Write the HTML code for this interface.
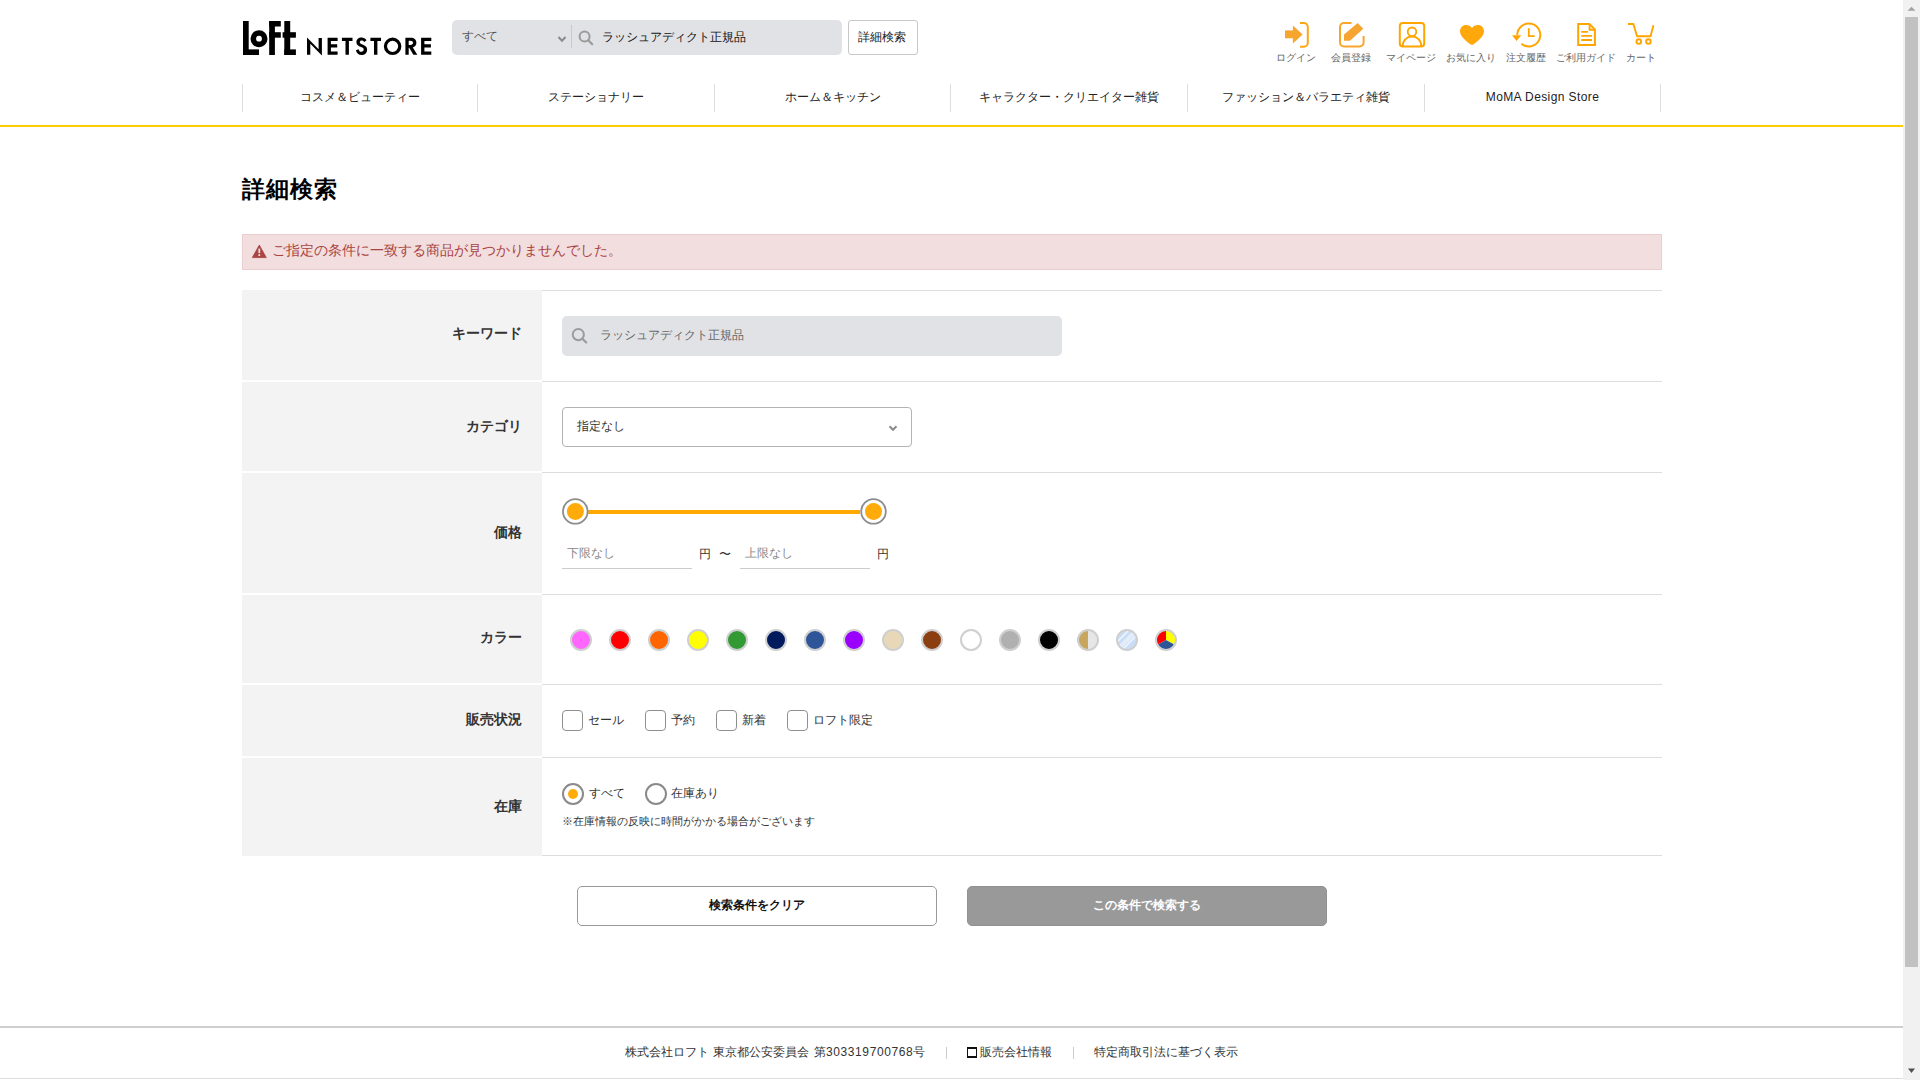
<!DOCTYPE html>
<html lang="ja">
<head>
<meta charset="utf-8">
<title>詳細検索 | ロフト公式通販サイト</title>
<style>
html,body{margin:0;padding:0;}
body{width:1920px;height:1080px;overflow:hidden;position:relative;background:#fff;font-family:"Liberation Sans",sans-serif;color:#333;}
.a{position:absolute;}
.t{position:absolute;white-space:nowrap;line-height:1;}
</style>
</head>
<body>

<!-- ============ HEADER ============ -->
<!-- logo -->
<svg class="a" style="left:0;top:0" width="460" height="70" viewBox="0 0 460 70">
  <g fill="#000">
    <!-- L -->
    <rect x="243" y="21" width="5.7" height="34"/>
    <rect x="243" y="49.4" width="16" height="5.6"/>
    <!-- o -->
    <circle cx="259" cy="38.7" r="5.7" fill="none" stroke="#000" stroke-width="5.6"/>
    <!-- F -->
    <rect x="269.2" y="21" width="5.7" height="34"/>
    <rect x="269.2" y="21" width="11.6" height="5.5"/>
    <rect x="269.2" y="32.2" width="11.6" height="5.5"/>
    <!-- t -->
    <rect x="284.3" y="21" width="5.9" height="34"/>
    <rect x="282.6" y="32.2" width="13.3" height="5.5"/>
    <rect x="284.3" y="49.4" width="11.6" height="5.6"/>
    <!-- NETSTORE -->
    <path d="M307,37.5 L318.6,49.3 V38 H321.9 V55.6 L310.3,43.8 V54.8 H307 Z"/>
    <path d="M327.6,37.7 H337.6 V40.9 H330.9 V44.2 H337.2 V47.5 H330.9 V51.5 H337.6 V54.8 H327.6 Z"/>
    <path d="M341.9,37.7 H352.5 V40.9 H348.9 V54.8 H345.5 V40.9 H341.9 Z"/>
    <path d="M366.6,40.2 C365.2,38.5 363.6,37.6 361.6,37.6 C358.4,37.6 356.4,39.6 356.4,42.2 C356.4,44.9 358.4,45.9 361,46.9 C362.9,47.6 363.7,48.3 363.7,49.6 C363.7,50.9 362.7,51.8 361.4,51.8 C359.9,51.8 358.9,50.8 358.6,49.2 L355.9,50.3 C356.6,53.3 358.7,55.1 361.5,55.1 C364.8,55.1 367.1,52.9 367.1,49.7 C367.1,46.9 365.5,45.6 362.5,44.5 C360.6,43.8 359.8,43.3 359.8,42.1 C359.8,41.2 360.6,40.6 361.6,40.6 C362.6,40.6 363.4,41 364.2,42 Z"/>
    <path d="M370.4,37.7 H381 V40.9 H377.4 V54.8 H374 V40.9 H370.4 Z"/>
    <path fill-rule="evenodd" d="M392.6,37.6 A8.75,8.75 0 1 1 392.6,55.1 A8.75,8.75 0 1 1 392.6,37.6 Z M392.6,40.8 A5.5,5.5 0 1 0 392.6,51.9 A5.5,5.5 0 1 0 392.6,40.8 Z"/>
    <path fill-rule="evenodd" d="M405.4,37.7 H410.8 C414.3,37.7 416.4,39.7 416.4,42.8 C416.4,45.2 415,46.9 412.8,47.5 L417.3,54.8 H413.4 L409.2,47.7 H408.7 V54.8 H405.4 Z M408.7,40.7 V44.9 H410.3 C412,44.9 413,44.2 413,42.8 C413,41.4 412,40.7 410.3,40.7 Z"/>
    <path d="M421.1,37.7 H431.3 V40.9 H424.4 V44.2 H430.9 V47.5 H424.4 V51.5 H431.3 V54.8 H421.1 Z"/>
  </g>
</svg>

<!-- search box -->
<div class="a" style="left:452px;top:20px;width:390px;height:35px;background:#e1e2e6;border-radius:5px;"></div>
<div class="t" style="left:462px;top:30px;font-size:12px;color:#555;">すべて</div>
<svg class="a" style="left:555px;top:33px" width="14" height="12" viewBox="0 0 14 12"><polyline points="3.5,4 7,7.8 10.5,4" fill="none" stroke="#8a8a8a" stroke-width="2"/></svg>
<div class="a" style="left:571px;top:25px;width:1px;height:23px;background:#c9c9cc;"></div>
<svg class="a" style="left:576px;top:28px" width="20" height="20" viewBox="0 0 20 20"><circle cx="8.6" cy="8.6" r="5" fill="none" stroke="#9b9b9b" stroke-width="2"/><line x1="12.3" y1="12.3" x2="16.2" y2="16.2" stroke="#9b9b9b" stroke-width="2.2" stroke-linecap="round"/></svg>
<div class="t" style="left:602px;top:31px;font-size:12px;color:#111;">ラッシュアディクト正規品</div>

<!-- detail button -->
<div class="a" style="left:848px;top:20px;width:68px;height:33px;border:1px solid #c8c8c8;border-radius:3px;background:#fff;"></div>
<div class="t" style="left:858px;top:31px;font-size:12px;color:#222;">詳細検索</div>

<!-- header icons -->
<svg class="a" style="left:1260px;top:10px" width="420" height="45" viewBox="1260 10 420 45">
  <!-- login -->
  <g fill="#f6a52e">
    <rect x="1285" y="30.4" width="9" height="7.9"/>
    <polygon points="1292.9,25.4 1302.6,34.4 1292.9,43.6"/>
  </g>
  <path d="M1300,23 H1303.8 A4,4 0 0 1 1307.8,27 V42.7 A4,4 0 0 1 1303.8,46.7 H1300" fill="none" stroke="#ffa514" stroke-width="2"/>
  <!-- register -->
  <path d="M1351.5,23 H1344 A4,4 0 0 0 1340,27 V42.5 A4,4 0 0 0 1344,46.5 H1359.6 A4,4 0 0 0 1363.6,42.5 V36" fill="none" stroke="#f9a52a" stroke-width="2"/>
  <polygon points="1344,34.5 1357.6,23 1363.3,28.8 1350,40.8 1344,40.8" fill="#f6a532"/>
  <!-- mypage -->
  <rect x="1399.8" y="23" width="24.4" height="23.6" rx="3" fill="none" stroke="#ffa500" stroke-width="2"/>
  <circle cx="1412" cy="31.8" r="4.3" fill="none" stroke="#ffa500" stroke-width="1.8"/>
  <path d="M1402.8,46.2 C1402.8,40.2 1406.8,36.6 1412,36.6 C1417.2,36.6 1421.2,40.2 1421.2,46.2" fill="none" stroke="#ffa500" stroke-width="2"/>
  <!-- heart -->
  <path d="M1472,28.1 C1470.8,26 1468.6,24.9 1466,24.9 C1462.6,24.9 1460,27.6 1460,31.2 C1460,35.8 1464.5,39.7 1470,44.1 C1470.6,44.6 1471.3,44.9 1472,44.9 C1472.7,44.9 1473.4,44.6 1474,44.1 C1479.5,39.7 1484,35.8 1484,31.2 C1484,27.6 1481.4,24.9 1478,24.9 C1475.4,24.9 1473.2,26 1472,28.1 Z" fill="#ffa80b"/>
  <!-- history -->
  <path d="M1517.3,35 A11.5,11.5 0 1 1 1521.4,43.8" fill="none" stroke="#ffa500" stroke-width="2"/>
  <polygon points="1512,35.2 1521.2,35.2 1516.6,40.9" fill="#ffa500"/>
  <path d="M1528.8,28.2 V36.1 H1534.7" fill="none" stroke="#ffa500" stroke-width="1.8"/>
  <!-- guide -->
  <path d="M1578.2,24.1 H1589.4 L1594.9,29.4 V44.9 H1578.2 Z" fill="none" stroke="#ffa500" stroke-width="2" stroke-miterlimit="2"/>
  <path d="M1589.6,24.8 V29.8 H1594.4" fill="none" stroke="#ffa500" stroke-width="1.9"/>
  <path d="M1581.2,31.9 H1588 M1581.2,35.9 H1592 M1581.2,40 H1592" stroke="#ffa500" stroke-width="1.9"/>
  <!-- cart -->
  <path d="M1628,24 H1633.4 L1637,36.2 H1650.6 L1653.4,25.3" fill="none" stroke="#ffa500" stroke-width="1.9" stroke-linejoin="round"/>
  <circle cx="1638.8" cy="41.6" r="2.3" fill="none" stroke="#ffa500" stroke-width="1.9"/>
  <circle cx="1648.4" cy="41.6" r="2.3" fill="none" stroke="#ffa500" stroke-width="1.9"/>
</svg>
<div class="t" style="left:1276px;top:53px;font-size:10px;color:#666;">ログイン</div>
<div class="t" style="left:1331px;top:53px;font-size:10px;color:#666;">会員登録</div>
<div class="t" style="left:1386px;top:53px;font-size:10px;color:#666;">マイページ</div>
<div class="t" style="left:1446px;top:53px;font-size:10px;color:#666;">お気に入り</div>
<div class="t" style="left:1506px;top:53px;font-size:10px;color:#666;">注文履歴</div>
<div class="t" style="left:1556px;top:53px;font-size:10px;color:#666;">ご利用ガイド</div>
<div class="t" style="left:1626px;top:53px;font-size:10px;color:#666;">カート</div>

<!-- nav -->
<div class="a" style="left:242px;top:84px;width:1px;height:28px;background:#ddd;"></div>
<div class="a" style="left:477px;top:84px;width:1px;height:28px;background:#ddd;"></div>
<div class="a" style="left:714px;top:84px;width:1px;height:28px;background:#ddd;"></div>
<div class="a" style="left:950px;top:84px;width:1px;height:28px;background:#ddd;"></div>
<div class="a" style="left:1187px;top:84px;width:1px;height:28px;background:#ddd;"></div>
<div class="a" style="left:1424px;top:84px;width:1px;height:28px;background:#ddd;"></div>
<div class="a" style="left:1660px;top:84px;width:1px;height:28px;background:#ddd;"></div>
<div class="t" style="left:243px;width:234px;text-align:center;top:91px;font-size:12px;color:#222;">コスメ＆ビューティー</div>
<div class="t" style="left:478px;width:236px;text-align:center;top:91px;font-size:12px;color:#222;">ステーショナリー</div>
<div class="t" style="left:715px;width:235px;text-align:center;top:91px;font-size:12px;color:#222;">ホーム＆キッチン</div>
<div class="t" style="left:951px;width:236px;text-align:center;top:91px;font-size:12px;color:#222;">キャラクター・クリエイター雑貨</div>
<div class="t" style="left:1188px;width:236px;text-align:center;top:91px;font-size:12px;color:#222;">ファッション＆バラエティ雑貨</div>
<div class="t" style="left:1425px;width:235px;text-align:center;top:91px;font-size:12px;letter-spacing:0.4px;color:#222;">MoMA Design Store</div>

<div class="a" style="left:0;top:125px;width:1903px;height:2px;background:#ffcc00;"></div>

<!-- ============ CONTENT ============ -->
<div class="t" style="left:242px;top:178px;font-size:23px;letter-spacing:1px;font-weight:bold;color:#000;">詳細検索</div>

<!-- alert -->
<div class="a" style="left:242px;top:234px;width:1418px;height:34px;background:#f2dede;border:1px solid #ebccd1;"></div>
<svg class="a" style="left:250px;top:242px" width="20" height="18" viewBox="0 0 20 18"><polygon points="9.3,3.1 16.3,15.6 2.3,15.6" fill="#a94442" stroke="#a94442" stroke-width="0.8" stroke-linejoin="round"/><rect x="8.4" y="6.6" width="1.8" height="4.5" fill="#f2dede"/><rect x="8.4" y="12.2" width="1.8" height="1.8" fill="#f2dede"/></svg>
<div class="t" style="left:272px;top:243px;font-size:14px;color:#a94442;">ご指定の条件に一致する商品が見つかりませんでした。</div>

<!-- table rows -->
<!-- label backgrounds -->
<div class="a" style="left:242px;top:290px;width:300px;height:90px;background:#f3f3f3;"></div>
<div class="a" style="left:242px;top:382px;width:300px;height:89px;background:#f3f3f3;"></div>
<div class="a" style="left:242px;top:473px;width:300px;height:120px;background:#f3f3f3;"></div>
<div class="a" style="left:242px;top:595px;width:300px;height:88px;background:#f3f3f3;"></div>
<div class="a" style="left:242px;top:685px;width:300px;height:71px;background:#f3f3f3;"></div>
<div class="a" style="left:242px;top:758px;width:300px;height:98px;background:#f3f3f3;"></div>
<!-- value borders -->
<div class="a" style="left:542px;top:290px;width:1120px;height:1px;background:#ddd;"></div>
<div class="a" style="left:542px;top:381px;width:1120px;height:1px;background:#ddd;"></div>
<div class="a" style="left:542px;top:472px;width:1120px;height:1px;background:#ddd;"></div>
<div class="a" style="left:542px;top:594px;width:1120px;height:1px;background:#ddd;"></div>
<div class="a" style="left:542px;top:684px;width:1120px;height:1px;background:#ddd;"></div>
<div class="a" style="left:542px;top:757px;width:1120px;height:1px;background:#ddd;"></div>
<div class="a" style="left:542px;top:855px;width:1120px;height:1px;background:#ddd;"></div>

<!-- labels -->
<div class="t" style="left:242px;width:280px;text-align:right;top:326px;font-size:14px;font-weight:bold;color:#333;">キーワード</div>
<div class="t" style="left:242px;width:280px;text-align:right;top:419px;font-size:14px;font-weight:bold;color:#333;">カテゴリ</div>
<div class="t" style="left:242px;width:280px;text-align:right;top:525px;font-size:14px;font-weight:bold;color:#333;">価格</div>
<div class="t" style="left:242px;width:280px;text-align:right;top:630px;font-size:14px;font-weight:bold;color:#333;">カラー</div>
<div class="t" style="left:242px;width:280px;text-align:right;top:712px;font-size:14px;font-weight:bold;color:#333;">販売状況</div>
<div class="t" style="left:242px;width:280px;text-align:right;top:799px;font-size:14px;font-weight:bold;color:#333;">在庫</div>

<!-- keyword -->
<div class="a" style="left:562px;top:316px;width:500px;height:40px;background:#e1e2e6;border-radius:5px;"></div>
<svg class="a" style="left:568px;top:325px" width="22" height="22" viewBox="0 0 22 22"><circle cx="10.3" cy="9.6" r="5.6" fill="none" stroke="#9b9b9b" stroke-width="2"/><line x1="14.4" y1="13.7" x2="18.2" y2="17.5" stroke="#9b9b9b" stroke-width="2.2" stroke-linecap="round"/></svg>
<div class="t" style="left:600px;top:329px;font-size:12px;color:#666;">ラッシュアディクト正規品</div>

<!-- category -->
<div class="a" style="left:562px;top:407px;width:348px;height:38px;border:1px solid #b3b3b3;border-radius:4px;background:#fff;"></div>
<div class="t" style="left:577px;top:420px;font-size:12px;color:#333;">指定なし</div>
<svg class="a" style="left:886px;top:422px" width="14" height="12" viewBox="0 0 14 12"><polyline points="3.5,4.3 7,7.8 10.5,4.3" fill="none" stroke="#8a8a8a" stroke-width="2"/></svg>

<!-- price slider -->
<div class="a" style="left:588px;top:510px;width:272px;height:4px;background:#ffa800;"></div>
<svg class="a" style="left:555px;top:490px" width="340" height="44" viewBox="555 490 340 44">
  <circle cx="575.3" cy="511.4" r="12.3" fill="#fff" stroke="#8d8d8d" stroke-width="1.8"/>
  <circle cx="575.4" cy="511.4" r="8.5" fill="#ffab0a"/>
  <circle cx="873.5" cy="511.4" r="12.3" fill="#fff" stroke="#8d8d8d" stroke-width="1.8"/>
  <circle cx="873.5" cy="511.4" r="8.5" fill="#ffab0a"/>
</svg>
<div class="a" style="left:562px;top:568px;width:130px;height:1px;background:#ccc;"></div>
<div class="t" style="left:567px;top:547px;font-size:12px;color:#888;">下限なし</div>
<div class="t" style="left:699px;top:548px;font-size:12px;color:#333;">円</div>
<div class="t" style="left:719px;top:548px;font-size:12px;color:#333;">〜</div>
<div class="a" style="left:740px;top:568px;width:130px;height:1px;background:#ccc;"></div>
<div class="t" style="left:745px;top:547px;font-size:12px;color:#888;">上限なし</div>
<div class="t" style="left:877px;top:548px;font-size:12px;color:#333;">円</div>

<!-- colors -->
<svg class="a" style="left:560px;top:620px" width="630" height="40" viewBox="560 620 630 40">
  <defs>
    <clipPath id="cg"><circle cx="1088" cy="640" r="9.5"/></clipPath>
    <clipPath id="cc"><circle cx="1127" cy="640" r="9.5"/></clipPath>
    <clipPath id="cm"><circle cx="1166" cy="640" r="9.5"/></clipPath>
  </defs>
  <g stroke="#cfcfcf" stroke-width="2">
    <circle cx="581" cy="640" r="10" fill="#ff66ff"/>
    <circle cx="620" cy="640" r="10" fill="#ff0000"/>
    <circle cx="659" cy="640" r="10" fill="#ff6600"/>
    <circle cx="698" cy="640" r="10" fill="#ffff00"/>
    <circle cx="737" cy="640" r="10" fill="#339933"/>
    <circle cx="776" cy="640" r="10" fill="#001a5e"/>
    <circle cx="815" cy="640" r="10" fill="#2e5597"/>
    <circle cx="854" cy="640" r="10" fill="#9900ff"/>
    <circle cx="893" cy="640" r="10" fill="#e8d8b8"/>
    <circle cx="932" cy="640" r="10" fill="#8b3e0f"/>
    <circle cx="971" cy="640" r="10" fill="#ffffff"/>
    <circle cx="1010" cy="640" r="10" fill="#b0b0b0"/>
    <circle cx="1049" cy="640" r="10" fill="#000000"/>
  </g>
  <g clip-path="url(#cg)">
    <rect x="1077" y="629" width="11" height="22" fill="#c9a65e"/>
    <rect x="1088" y="629" width="11" height="22" fill="#e6e6e6"/>
  </g>
  <circle cx="1088" cy="640" r="10" fill="none" stroke="#cfcfcf" stroke-width="2"/>
  <g clip-path="url(#cc)">
    <rect x="1116" y="629" width="22" height="22" fill="#c9ddf6"/>
    <path d="M1116,650 L1138,628 L1138,632 L1120,650 Z" fill="#e3edfa"/>
    <path d="M1116,642 L1128,630 L1130,630 L1116,644 Z" fill="#f2f7fd"/>
    <path d="M1121,650 L1138,633 L1138,635 L1123,650 Z" fill="#f2f7fd"/>
    <path d="M1118,646 L1134,630 L1137,630 L1121,646 Z" fill="#e3edfa"/>
  </g>
  <circle cx="1127" cy="640" r="10" fill="none" stroke="#cfcfcf" stroke-width="2"/>
  <g clip-path="url(#cm)">
    <path d="M1166,640 L1166,628 L1154,628 L1154,646.5 Z" fill="#ff0000"/>
    <path d="M1166,640 L1166,628 L1178,628 L1178,646.5 Z" fill="#ffff00"/>
    <path d="M1166,640 L1154,646.5 L1154,652 L1178,652 L1178,646.5 Z" fill="#2e5597"/>
  </g>
  <circle cx="1166" cy="640" r="10" fill="none" stroke="#cfcfcf" stroke-width="2"/>
</svg>

<!-- sale status -->
<div class="a" style="left:562px;top:710px;width:19px;height:19px;border:1px solid #8f8f8f;border-radius:4px;"></div>
<div class="t" style="left:588px;top:714px;font-size:12px;color:#333;">セール</div>
<div class="a" style="left:645px;top:710px;width:19px;height:19px;border:1px solid #8f8f8f;border-radius:4px;"></div>
<div class="t" style="left:671px;top:714px;font-size:12px;color:#333;">予約</div>
<div class="a" style="left:716px;top:710px;width:19px;height:19px;border:1px solid #8f8f8f;border-radius:4px;"></div>
<div class="t" style="left:742px;top:714px;font-size:12px;color:#333;">新着</div>
<div class="a" style="left:787px;top:710px;width:19px;height:19px;border:1px solid #8f8f8f;border-radius:4px;"></div>
<div class="t" style="left:813px;top:714px;font-size:12px;color:#333;">ロフト限定</div>

<!-- stock -->
<div class="a" style="left:562px;top:783px;width:18px;height:18px;border:2px solid #8a8a8a;border-radius:50%;"></div>
<div class="a" style="left:568px;top:789px;width:10px;height:10px;border-radius:50%;background:#ffab0a;"></div>
<div class="t" style="left:589px;top:787px;font-size:12px;color:#333;">すべて</div>
<div class="a" style="left:645px;top:783px;width:18px;height:18px;border:2px solid #8a8a8a;border-radius:50%;"></div>
<div class="t" style="left:671px;top:787px;font-size:12px;color:#333;">在庫あり</div>
<div class="t" style="left:562px;top:816px;font-size:11px;color:#333;">※在庫情報の反映に時間がかかる場合がございます</div>

<!-- buttons -->
<div class="a" style="left:577px;top:886px;width:358px;height:38px;border:1px solid #999;border-radius:5px;background:#fff;"></div>
<div class="t" style="left:577px;width:360px;text-align:center;top:899px;font-size:12px;font-weight:bold;color:#111;">検索条件をクリア</div>
<div class="a" style="left:967px;top:886px;width:358px;height:38px;border:1px solid #919191;border-radius:5px;background:#999;"></div>
<div class="t" style="left:967px;width:360px;text-align:center;top:899px;font-size:12px;font-weight:bold;color:#fff;">この条件で検索する</div>

<!-- footer -->
<div class="a" style="left:0;top:1026px;width:1903px;height:2px;background:#cfcfcf;"></div>
<div class="t" style="left:625px;top:1046px;font-size:12px;color:#333;word-spacing:1.1px;">株式会社ロフト 東京都公安委員会 第<span style="letter-spacing:0.62px">303319700768</span>号</div>
<div class="a" style="left:946px;top:1047px;width:1px;height:12px;background:#ccc;"></div>
<div class="a" style="left:967px;top:1047px;width:8px;height:7px;border:1px solid #111;border-top-width:2px;border-bottom-width:2px;"></div>
<div class="t" style="left:980px;top:1046px;font-size:12px;color:#333;">販売会社情報</div>
<div class="a" style="left:1073px;top:1047px;width:1px;height:12px;background:#ccc;"></div>
<div class="t" style="left:1094px;top:1046px;font-size:12px;color:#333;">特定商取引法に基づく表示</div>
<div class="a" style="left:0;top:1078px;width:1903px;height:1px;background:#ddd;"></div>

<!-- scrollbar -->
<div class="a" style="left:1903px;top:0;width:17px;height:1080px;background:#f1f1f1;"></div>
<div class="a" style="left:1905px;top:17px;width:13px;height:950px;background:#c1c1c1;"></div>
<svg class="a" style="left:1903px;top:0" width="17" height="17" viewBox="0 0 17 17"><polygon points="4.5,10.8 8.5,6.7 12.5,10.8" fill="#a3a3a3"/></svg>
<svg class="a" style="left:1903px;top:1063px" width="17" height="17" viewBox="0 0 17 17"><polygon points="5,5.4 12,5.4 8.5,10" fill="#505050"/></svg>

</body>
</html>
